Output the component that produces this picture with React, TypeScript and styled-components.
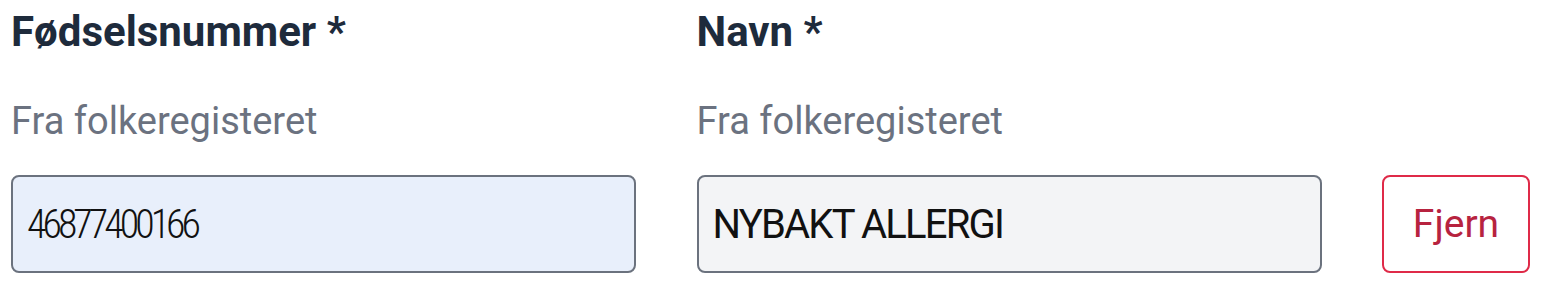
import React from 'react'
import styled, { createGlobalStyle } from 'styled-components'

const GlobalStyle = createGlobalStyle`
  body {
    margin: 0;
    background: #ffffff;
    font-family: Roboto, "Liberation Sans", sans-serif;
  }
`

const Row = styled.div`
  display: flex;
  align-items: flex-end;
  gap: 60.5px;
  padding: 7px 0 0 11px;
`

const Field = styled.div`
  display: flex;
  flex-direction: column;
  width: 625px;
`

const Label = styled.label`
  font-size: 42px;
  line-height: 50px;
  font-weight: 700;
  color: #1e2b3c;
`

const Description = styled.div`
  margin-top: 41.5px;
  font-size: 38px;
  line-height: 44px;
  color: #6b7280;
`

const Input = styled.input<{ $tone: 'blue' | 'gray'; $condensed?: boolean; $tracking: number }>`
  box-sizing: border-box;
  margin-top: 32.5px;
  width: 100%;
  height: 98px;
  padding: 0 14px;
  border: 2px solid #6b727e;
  border-radius: 8px;
  background: ${({ $tone }) => ($tone === 'blue' ? '#e8effb' : '#f3f4f6')};
  font-family: Roboto, "Liberation Sans", sans-serif;
  font-stretch: ${({ $condensed }) => ($condensed ? 'condensed' : 'normal')};
  font-weight: ${({ $condensed }) => ($condensed ? 300 : 400)};
  letter-spacing: ${({ $tracking }) => $tracking}px;
  font-size: 40px;
  color: #111111;
  outline: none;
`

const RemoveButton = styled.button`
  box-sizing: border-box;
  width: 148px;
  height: 98px;
  border: 2px solid #df2a48;
  border-radius: 8px;
  background: #ffffff;
  color: #b7233f;
  font-family: Roboto, "Liberation Sans", sans-serif;
  font-size: 39px;
  cursor: pointer;
`

export default function App() {
  return (
    <>
      <GlobalStyle />
      <Row>
        <Field>
          <Label>Fødselsnummer *</Label>
          <Description>Fra folkeregisteret</Description>
          <Input $tone="blue" $condensed $tracking={-4} readOnly value="46877400166" />
        </Field>
        <Field>
          <Label>Navn *</Label>
          <Description>Fra folkeregisteret</Description>
          <Input $tone="gray" $tracking={-1.8} readOnly value="NYBAKT ALLERGI" />
        </Field>
        <RemoveButton type="button">Fjern</RemoveButton>
      </Row>
    </>
  )
}
